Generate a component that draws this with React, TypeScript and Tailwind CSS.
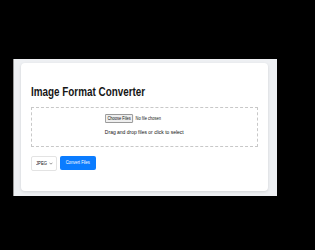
import React from "react";

export default function App() {
  return (
    <div
      className="w-[315px] h-[250px] bg-black pt-[59px] pl-[13px] overflow-hidden"
      style={{ fontFamily: '"Liberation Sans", Arial, sans-serif' }}
    >
      <div className="w-[264px] h-[137px] bg-[#eef0f3] border-l border-[#9a9a9a] pl-[7px] pt-[4px]">
        <div className="w-[247px] h-[128px] bg-white rounded-[4px] shadow-[0_1px_3px_rgba(0,0,0,0.12)] px-[10px] pt-[21px]">
          <h1 className="text-[13px] leading-[15px] font-bold text-[#161616] scale-x-[0.76] origin-left whitespace-nowrap">
            Image Format Converter
          </h1>
          <div className="mt-[8px] h-[40px] border border-dashed border-[#c8c8c8] flex flex-col items-center pt-[6px]">
            <div className="w-[79px] flex">
              <div className="flex items-center gap-[3px] scale-x-[0.8] origin-left whitespace-nowrap">
                <span className="text-[5px] leading-[7px] px-[2px] border border-[#8f8f8f] rounded-[1px] bg-[#efefef] text-[#111]">
                  Choose Files
                </span>
                <span className="text-[5px] leading-[7px] text-[#111]">No file chosen</span>
              </div>
            </div>
            <div className="mt-[6px] text-[5.6px] leading-[7px] text-[#111] scale-x-[0.89] whitespace-nowrap">
              Drag and drop files or click to select
            </div>
          </div>
          <div className="mt-[9px] flex items-start gap-[3px]">
            <div className="w-[26px] h-[15px] border border-[#e3e3e3] rounded-[2px] bg-white flex items-center justify-between pl-[4px] pr-[3px]">
              <span className="text-[5px] text-[#111] scale-x-[0.84] origin-left inline-block">JPEG</span>
              <svg width="4" height="3" viewBox="0 0 4 3">
                <path d="M0.5 0.7 L2 2.2 L3.5 0.7" stroke="#555" strokeWidth="0.6" fill="none" />
              </svg>
            </div>
            <div className="w-[36px] h-[14px] rounded-[2px] bg-[#0b7cff] flex items-center justify-center">
              <span className="text-[5px] text-white scale-x-[0.82] inline-block whitespace-nowrap">Convert Files</span>
            </div>
          </div>
        </div>
      </div>
    </div>
  );
}
